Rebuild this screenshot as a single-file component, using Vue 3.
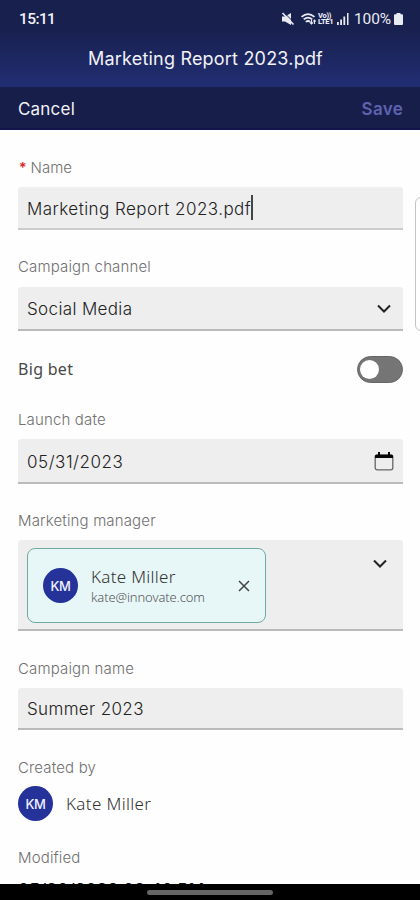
<script setup>
const title = 'Marketing Report 2023.pdf'
const person = { initials: 'KM', name: 'Kate Miller', email: 'kate@innovate.com' }
</script>

<template>
  <div class="screen">
    <header class="top">
      <div class="status">
        <span class="time">15:11</span>
        <div class="indicators">
          <svg class="mute" viewBox="0 0 14 14">
            <path d="M1 4.500h3l6-3.500v12L4 9.500H1z" fill="currentColor" />
            <path d="M3 .5l11 11" stroke="#18204e" stroke-width="1" />
            <path d="M1.500 1l11 11.500" stroke="currentColor" stroke-width="1.700" />
          </svg>
          <svg class="wifi" viewBox="0 0 16 14" fill="none" stroke="currentColor" stroke-width="1.7">
            <path d="M1 4.8q6.500-5.500 13 0M3.200 7.400q4.300-3.600 8.600 0M5.300 9.900q2.200-1.800 4.400 0" />
            <path d="M11 8v4m-1.500-1.500L11 12l1.500-1.500M14 12V8m-1.300 1.500L14 8l1.300 1.500" stroke-width="1.100" />
          </svg>
          <span class="volte">Vo)) LTE1</span>
          <svg class="signal" viewBox="0 0 12 12" fill="currentColor">
            <path d="M0 9h1.800v3H0zM3.200 6.500H5V12H3.200zM6.400 3.500h1.800V12H6.400zM10 0h1.500v12H10z" />
          </svg>
          <span class="percent">100%</span>
          <svg class="battery" viewBox="0 0 9 12" fill="currentColor">
            <path d="M2.500 0h4v1.300H8q1 0 1 1V11q0 1-1 1H1q-1 0-1-1V2.300q0-1 1-1h1.500z" />
          </svg>
        </div>
      </div>
      <h1 class="title">{{ title }}</h1>
    </header>
    <nav class="actions">
      <span class="cancel">Cancel</span>
      <span class="save">Save</span>
    </nav>

    <main class="form">
      <label class="label required"><span class="star">*</span><span>Name</span></label>
      <div class="input name"><span class="value">{{ title }}</span><i class="caret"></i></div>

      <label class="label channel-label">Campaign channel</label>
      <div class="input channel">
        <span class="value">Social Media</span>
        <svg class="chevron" viewBox="0 0 14 9"><path d="M1 1.500l6 6 6-6" /></svg>
      </div>

      <div class="bet"><span class="bet-text">Big bet</span><span class="toggle"><i></i></span></div>

      <label class="label launch">Launch date</label>
      <div class="input date">
        <span class="value">05/31/2023</span>
        <svg class="calendar" viewBox="0 0 20 19">
          <rect x="1.200" y="3" width="17.600" height="14.800" rx="2" fill="none" stroke="#666" stroke-width="1.300" />
          <path d="M1 6V4q0-1.300 1.500-1.300h15Q19 2.700 19 4v2zM4 0h2v4H4zM14 0h2v4h-2z" fill="#080808" />
        </svg>
      </div>

      <label class="label manager">Marketing manager</label>
      <div class="input picker">
        <div class="chip">
          <span class="avatar">{{ person.initials }}</span>
          <div class="details">
            <span class="chip-name">{{ person.name }}</span>
            <span class="email">{{ person.email }}</span>
          </div>
          <svg class="close" viewBox="0 0 12 12"><path d="M1 1l10 10M11 1L1 11" /></svg>
        </div>
        <svg class="chevron" viewBox="0 0 14 9"><path d="M1 1.500l6 6 6-6" /></svg>
      </div>

      <label class="label campaign">Campaign name</label>
      <div class="input summer"><span class="value">Summer 2023</span></div>

      <label class="label created">Created by</label>
      <div class="creator"><span class="avatar">{{ person.initials }}</span><span class="creator-name">{{ person.name }}</span></div>

      <label class="label modified">Modified</label>
      <div class="modified-value">05/30/2023 08:40 PM</div>
    </main>
    <footer class="home"><i></i></footer>
    <div class="edge"></div>
  </div>
</template>

<style>
body { margin: 0; background: #fff; }
</style>

<style scoped>
* { box-sizing: border-box; }
.screen { position: relative; width: 420px; height: 900px; overflow: hidden; display: flex; flex-direction: column; background: #fefefe; font-family: Inter, sans-serif; color: #333; }
svg { display: block; flex: none; }
.top { height: 87px; flex: none; background: linear-gradient(#18204e 0 32%, #202d70 94%); color: #f1f2f6; }
.status { height: 38px; padding: 0 17px 0 19px; display: flex; justify-content: space-between; align-items: center; font: 500 15.500px Roboto, sans-serif; }
.time { letter-spacing: -.6px; }
.indicators { display: flex; align-items: center; color: #e9eaf2; }
.mute { width: 14px; height: 14px; margin-right: 5px; }
.wifi { width: 17px; height: 14px; margin-right: 1px; }
.volte { width: 16px; font: 800 7.500px/6.500px Roboto, sans-serif; letter-spacing: -.3px; margin-right: 3px; }
.signal { width: 12px; height: 12px; margin-right: 5px; }
.percent { font-size: 15.500px; font-weight: 400; letter-spacing: -.1px; width: 38px; white-space: nowrap; }
.battery { width: 9px; height: 12px; margin-left: 2px; }
.title { margin: 9px 9px 0 0; line-height: 24px; text-align: center; font-size: 18px; font-weight: 400; letter-spacing: .2px; }
.actions { height: 43px; flex: none; padding: 2px 17px 0 18px; display: flex; align-items: center; justify-content: space-between; background: #181e4a; border-bottom: 2px solid #11154a; font-size: 17px; color: #f1f1f5; letter-spacing: .2px; }
.save { color: #5f62b1; font-weight: 600; letter-spacing: .3px; }
.form { flex: none; height: 754px; overflow: hidden; padding: 28px 17px 0 18px; display: flex; flex-direction: column; }
.label { height: 20px; flex: none; line-height: 20px; font-size: 15px; font-weight: 300; color: #707070; white-space: nowrap; letter-spacing: .15px; }
.required { display: flex; gap: 4px; padding-left: 1px; letter-spacing: 0; }
.star { color: #df2525; font-weight: 600; font-size: 14px; }
.input { flex: none; display: flex; align-items: center; padding: 0 10px 0 9px; background: #eee; border-bottom: 2px solid #bbb; border-radius: 3px 3px 0 0; font-size: 17px; font-weight: 300; color: #222; }
.value { padding-top: 2px; letter-spacing: .36px; white-space: nowrap; }
.name .value { letter-spacing: .45px; }
.date .value { letter-spacing: .52px; }
.name { height: 43px; margin-top: 9px; border-bottom-color: #ccc; }
.caret { width: 2px; height: 25px; background: #444; }
.channel-label { margin-top: 27px; }
.channel { height: 44px; margin-top: 10px; justify-content: space-between; padding-right: 12px; }
.chevron { width: 14px; height: 9px; fill: none; stroke: #222; stroke-width: 2; }
.bet { margin-top: 25px; height: 27px; flex: none; display: flex; justify-content: space-between; align-items: center; }
.bet-text { font: 400 16px 'Noto Sans', sans-serif; letter-spacing: .3px; padding-bottom: 2px; color: #484848; }
.toggle { width: 46px; height: 27px; padding: 4px 2px; border-radius: 14px; background: #757575; border: 1px solid #666; display: flex; align-items: center; }
.toggle i { width: 19px; height: 19px; border-radius: 50%; background: #fff; }
.launch { margin-top: 27px; }
.date { height: 45px; margin-top: 9px; justify-content: space-between; padding-right: 9px; }
.calendar { width: 20px; height: 19px; margin-top: 2px; }
.manager { margin-top: 27px; }
.picker { height: 91px; margin-top: 9px; align-items: flex-start; justify-content: space-between; padding: 8px 16px 0 9px; }
.picker > .chevron { margin-top: 11px; }
.chip { width: 239px; height: 75px; padding: 0 15px 0 15px; display: flex; align-items: center; background: #e7f7f8; border: 1px solid #70aaa2; border-radius: 8px; }
.avatar { width: 35px; height: 35px; flex: none; border-radius: 50%; background: #24329a; color: #f0f1ff; display: flex; align-items: center; justify-content: center; font: 500 13px Inter, sans-serif; letter-spacing: -.3px; }
.details { display: flex; flex-direction: column; flex: 1; margin-left: 13px; padding-top: 1px; font-family: 'Noto Sans', sans-serif; white-space: nowrap; }
.chip-name { font-size: 17px; line-height: 22px; color: #333; font-weight: 300; letter-spacing: .3px; }
.email { font-size: 13px; line-height: 18px; color: #555; font-weight: 300; letter-spacing: -.12px; }
.close { width: 12px; height: 12px; fill: none; stroke: #444; stroke-width: 1.500; }
.campaign { margin-top: 28px; }
.summer { height: 42px; margin-top: 9px; }
.created { margin-top: 28px; }
.creator { margin-top: 8px; height: 35px; flex: none; display: flex; align-items: center; gap: 13px; }
.creator-name { font: 300 17px 'Noto Sans', sans-serif; letter-spacing: .35px; }
.modified { margin-top: 27px; }
.modified-value { margin-top: 10px; flex: none; font-size: 17px; line-height: 24px; color: #111; font-weight: 500; letter-spacing: .2px; }
.home { height: 16px; flex: none; background: #000; display: flex; justify-content: center; padding-top: 6px; }
.home i { width: 126px; height: 5px; border-radius: 3px; background: #656565; }
.edge { position: absolute; left: 415px; top: 197px; width: 12px; height: 134px; border: 1px solid #c4c4c4; border-radius: 6px; background: #fff; }
</style>
